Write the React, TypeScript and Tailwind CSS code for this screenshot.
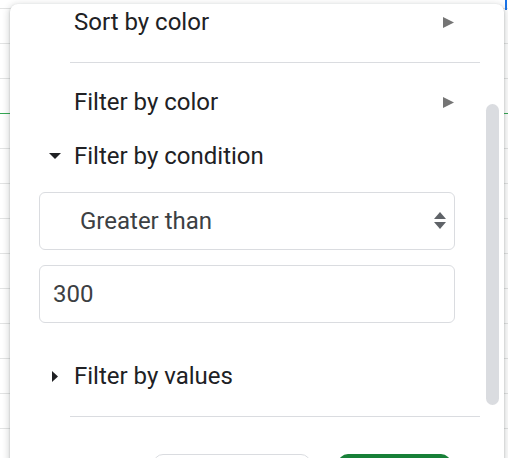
import React from "react";

const font = { fontFamily: "Roboto, 'Liberation Sans', sans-serif" };

function RightArrow() {
  return (
    <svg width="11" height="11" viewBox="0 0 11 11">
      <path d="M0 0 L11 5.5 L0 11 Z" fill="#757575" />
    </svg>
  );
}

function Row({ children, arrow }: { children: React.ReactNode; arrow?: boolean }) {
  return (
    <div className="h-[36px] flex items-center justify-between pl-[64px] pr-[50px]">
      <span className="text-[24px] text-[#202124] leading-none">{children}</span>
      {arrow && <RightArrow />}
    </div>
  );
}

export default function App() {
  const rows = Array.from({ length: 13 });
  return (
    <div className="relative w-[508px] h-[458px] overflow-hidden bg-white" style={font}>
      {/* spreadsheet background */}
      <div className="absolute inset-0 flex flex-col">
        <div className="h-[4px] bg-[#93c47d] flex">
          <div className="w-[10px] bg-[#d0d0d0]" />
          <div className="w-[332px]" />
          <div className="w-[2px] bg-[#1a73e8]" />
          <div className="flex-1" />
          <div className="w-[26px] bg-[#1b3a1d]" />
          <div className="w-[4px] bg-[#1a73e8]" />
        </div>
        <div className="h-[9px] shrink-0 border-b border-[#e2e3e3]" />
        {rows.map((_, i) => (
          <div
            key={i}
            className={`h-[35px] shrink-0 border-b ${i === 2 ? "border-[#34a853]" : "border-[#e2e3e3]"}`}
          />
        ))}
      </div>
      <div className="absolute left-[505px] top-[0px] w-[2px] h-[10px] bg-[#1a73e8]" />

      {/* menu panel */}
      <div className="absolute left-[10px] top-[4px] w-[494px] h-[480px] bg-white rounded-[8px] shadow-[0_2px_6px_2px_rgba(60,64,67,0.18),0_1px_2px_rgba(60,64,67,0.3)]">
        <div className="flex flex-col">
          <Row arrow>Sort by color</Row>
          <div className="mt-[22px] ml-[60px] w-[410px] h-px bg-[#dadce0]" />
          <div className="mt-[21px]">
            <Row arrow>Filter by color</Row>
          </div>
          <div className="mt-[18px] h-[36px] flex items-center">
            <div className="w-[51px] shrink-0 flex justify-end">
              <svg width="12" height="6" viewBox="0 0 12 6">
                <path d="M0 0 L12 0 L6 6 Z" fill="#202124" />
              </svg>
            </div>
            <span className="ml-[13px] text-[24px] text-[#202124] leading-none">Filter by condition</span>
          </div>
          <div className="mt-[18px] ml-[29px] w-[416px] h-[58px] border border-[#dadce0] rounded-[6px] flex items-center justify-between pl-[40px] pr-[8px]">
            <span className="text-[24px] text-[#3c4043] leading-none">Greater than</span>
            <svg width="12" height="18" viewBox="0 0 12 18">
              <path d="M6 0 L12 7 L0 7 Z" fill="#5f6368" />
              <path d="M0 10 L12 10 L6 17 Z" fill="#5f6368" />
            </svg>
          </div>
          <div className="mt-[15px] ml-[29px] w-[416px] h-[58px] border border-[#dadce0] rounded-[6px] flex items-center pl-[13px]">
            <span className="text-[24px] text-[#3c4043] leading-none">300</span>
          </div>
          <div className="mt-[35px] h-[36px] flex items-center">
            <div className="w-[48px] shrink-0 flex justify-end">
              <svg width="6" height="11" viewBox="0 0 6 11">
                <path d="M0 0 L6 5.5 L0 11 Z" fill="#202124" />
              </svg>
            </div>
            <span className="ml-[16px] text-[24px] text-[#202124] leading-none">Filter by values</span>
          </div>
          <div className="mt-[22px] ml-[60px] w-[410px] h-px bg-[#dadce0]" />
          <div className="mt-[37px] flex">
            <div className="ml-[143px] w-[158px] h-[40px] border border-[#dadce0] rounded-[10px]" />
            <div className="ml-[27px] w-[113px] h-[40px] bg-[#188038] rounded-[10px]" />
          </div>
        </div>
        <div className="absolute left-[476px] top-[100px] w-[13px] h-[301px] rounded-full bg-[#dadce0]" />
      </div>
    </div>
  );
}
